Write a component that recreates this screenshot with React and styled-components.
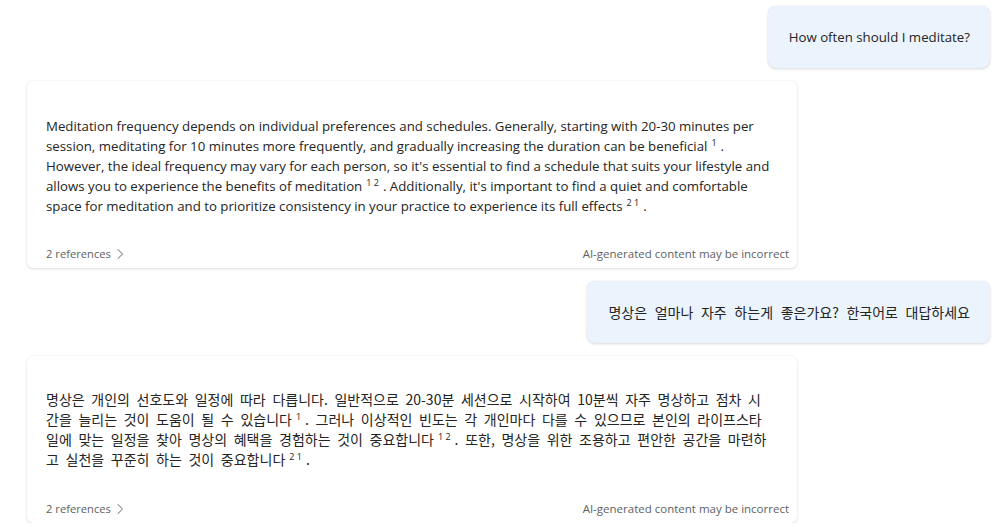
import styled, { createGlobalStyle } from 'styled-components';

const GlobalStyle = createGlobalStyle`
  html, body {
    margin: 0;
    padding: 0;
    background: #ffffff;
  }
  body {
    font-family: "Open Sans", "Noto Sans CJK KR", sans-serif;
    color: #242424;
  }
`;

const latin = '"Open Sans", "Noto Sans CJK KR", sans-serif';
const korean = '"Noto Sans CJK KR", sans-serif';

const Thread = styled.div`
  display: flex;
  flex-direction: column;
  gap: 13px;
  padding: 6px 14px 0 27px;
  width: 1004px;
  box-sizing: border-box;
`;

const UserBubble = styled.div`
  align-self: flex-end;
  background: #ebf3fc;
  border-radius: 8px;
  box-shadow: 0 1px 3px rgba(0, 0, 0, 0.14), 0 0 1px rgba(0, 0, 0, 0.1);
  padding: 21px 20px 21px 21px;
  font-family: ${(p) => (p.$ko ? korean : latin)};
  font-size: ${(p) => (p.$ko ? '14px' : '13.25px')};
  word-spacing: ${(p) => (p.$ko ? '4.5px' : '0')};
  line-height: 20px;
  color: #242424;
  white-space: nowrap;
`;

const Card = styled.div`
  width: 770px;
  box-sizing: border-box;
  background: #ffffff;
  border-radius: 6px;
  box-shadow: 0 1px 3px rgba(0, 0, 0, 0.13), 0 0 1px rgba(0, 0, 0, 0.1);
  padding: 35px 8px 6px 19px;
  display: flex;
  flex-direction: column;
`;

const Body = styled.p`
  margin: ${(p) => (p.$ko ? '-2px 0 2px' : '0')};
  font-family: ${(p) => (p.$ko ? korean : latin)};
  font-size: ${(p) => (p.$ko ? '14px' : '13.25px')};
  word-spacing: ${(p) => (p.$ko ? '3.5px' : '0')};
  line-height: 20px;
  color: #242424;
  white-space: nowrap;
`;

const Cite = styled.sup`
  font-family: ${latin};
  font-size: 9px;
  line-height: 0;
  word-spacing: 0;
  vertical-align: 5px;
  margin: 0 4px 0 4px;
`;

const Footer = styled.div`
  margin-top: 30px;
  display: flex;
  justify-content: space-between;
  align-items: center;
  font-size: 11.2px;
  line-height: 16px;
  color: #616161;
`;

const Disclaimer = styled.span`
  font-size: 11.5px;
`;

const Refs = styled.button`
  display: flex;
  align-items: center;
  gap: 5px;
  border: none;
  background: none;
  padding: 0;
  font: inherit;
  color: inherit;
  cursor: pointer;
`;

const Chevron = () => (
  <svg width="8" height="12" viewBox="0 0 8 12" fill="none">
    <path d="M2 1.5 L6.5 6 L2 10.5" stroke="#616161" strokeWidth="1" strokeLinecap="round" strokeLinejoin="round" />
  </svg>
);

const CardFooter = () => (
  <Footer>
    <Refs>
      2 references <Chevron />
    </Refs>
    <Disclaimer>AI-generated content may be incorrect</Disclaimer>
  </Footer>
);

export default function App() {
  return (
    <>
      <GlobalStyle />
      <Thread>
        <UserBubble>How often should I meditate?</UserBubble>
        <Card>
          <Body>
            Meditation frequency depends on individual preferences and schedules. Generally, starting with 20-30 minutes per
            <br />
            session, meditating for 10 minutes more frequently, and gradually increasing the duration can be beneficial<Cite>1</Cite>.
            <br />
            However, the ideal frequency may vary for each person, so it's essential to find a schedule that suits your lifestyle and
            <br />
            allows you to experience the benefits of meditation<Cite>1 2</Cite>. Additionally, it's important to find a quiet and comfortable
            <br />
            space for meditation and to prioritize consistency in your practice to experience its full effects<Cite>2 1</Cite>.
          </Body>
          <CardFooter />
        </Card>
        <UserBubble $ko>명상은 얼마나 자주 하는게 좋은가요? 한국어로 대답하세요</UserBubble>
        <Card>
          <Body $ko>
            명상은 개인의 선호도와 일정에 따라 다릅니다. 일반적으로 20-30분 세션으로 시작하여 10분씩 자주 명상하고 점차 시
            <br />
            간을 늘리는 것이 도움이 될 수 있습니다<Cite>1</Cite>. 그러나 이상적인 빈도는 각 개인마다 다를 수 있으므로 본인의 라이프스타
            <br />
            일에 맞는 일정을 찾아 명상의 혜택을 경험하는 것이 중요합니다<Cite>1 2</Cite>. 또한, 명상을 위한 조용하고 편안한 공간을 마련하
            <br />
            고 실천을 꾸준히 하는 것이 중요합니다<Cite>2 1</Cite>.
          </Body>
          <CardFooter />
        </Card>
      </Thread>
    </>
  );
}
